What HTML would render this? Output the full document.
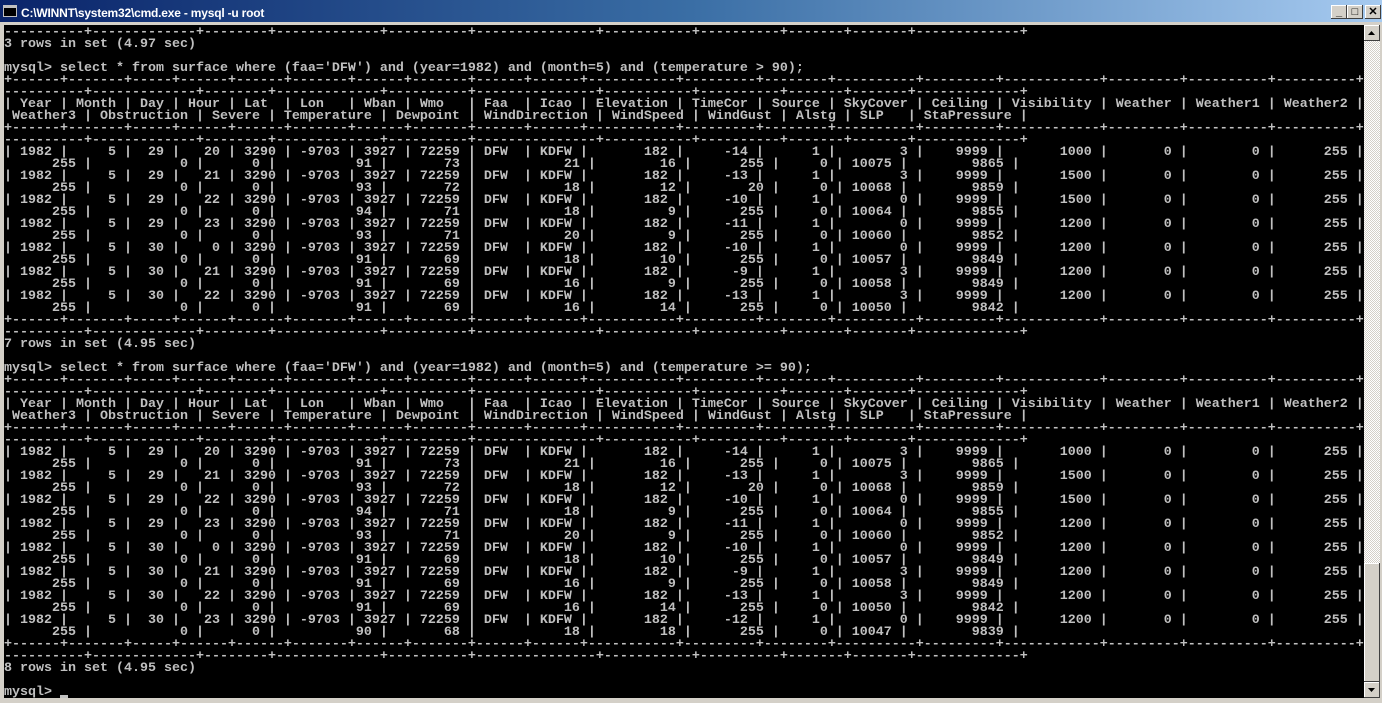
<!DOCTYPE html>
<html><head><meta charset="utf-8"><style>
html,body{margin:0;padding:0;}
body{width:1382px;height:702px;background:#d4d0c8;position:relative;overflow:hidden;}
#title{position:absolute;left:0;top:0;width:1382px;height:22px;background:linear-gradient(to right,#0a246a 0%,#3a6ea5 50%,#a6caf0 100%);}
#title .t{position:absolute;left:21px;top:6px;color:#fff;font:bold 12px "Liberation Sans",sans-serif;letter-spacing:-0.2px;white-space:pre;}
#title .ic{position:absolute;left:3px;top:5px;width:14px;height:12px;background:#000;border:1px solid #c0c0c0;box-sizing:border-box;}
#title .ic:after{content:"";position:absolute;left:0;top:0;width:12px;height:2px;background:#c0c0c0;}
.btn{position:absolute;top:5px;width:16px;height:14px;background:#d4d0c8;box-shadow:inset -1px -1px #404040,inset 1px 1px #fff;font:bold 11px "Liberation Sans",sans-serif;color:#000;text-align:center;line-height:14px;}
#con{position:absolute;left:4px;top:25px;width:1360px;height:673px;background:#000;overflow:hidden;}
pre{margin:0;padding-top:2px;font:bold 13.33px/12px "Liberation Mono",monospace;color:#c0c0c0;white-space:pre;}
#sb{position:absolute;left:1364px;top:25px;width:16px;height:673px;background-color:#eeeeee;background-image:repeating-conic-gradient(#d4d0c8 0 25%,#ffffff 0 50%);background-size:2px 2px;}
.sbb{position:absolute;left:0;width:16px;height:16px;background:#d4d0c8;box-shadow:inset -1px -1px #404040,inset 1px 1px #fff;}
.cur{position:absolute;left:56px;top:668px;width:8px;height:3px;background:#c0c0c0;}
</style></head><body>
<div id="title"><div class="ic"></div><div class="t">C:\WINNT\system32\cmd.exe - mysql -u root</div>
<div class="btn" style="left:1331px">_</div><div class="btn" style="left:1347px">□</div><div class="btn" style="left:1365px">✕</div></div>
<div id="con"><pre>----------+-------------+--------+-------------+----------+---------------+-----------+----------+-------+-------+-------------+
3 rows in set (4.97 sec)

mysql> select * from surface where (faa='DFW') and (year=1982) and (month=5) and (temperature &gt; 90);
+------+-------+-----+------+------+-------+------+-------+------+------+-----------+---------+--------+----------+---------+------------+---------+----------+----------+
----------+-------------+--------+-------------+----------+---------------+-----------+----------+-------+-------+-------------+
| Year | Month | Day | Hour | Lat  | Lon   | Wban | Wmo   | Faa  | Icao | Elevation | TimeCor | Source | SkyCover | Ceiling | Visibility | Weather | Weather1 | Weather2 |
 Weather3 | Obstruction | Severe | Temperature | Dewpoint | WindDirection | WindSpeed | WindGust | Alstg | SLP   | StaPressure |
+------+-------+-----+------+------+-------+------+-------+------+------+-----------+---------+--------+----------+---------+------------+---------+----------+----------+
----------+-------------+--------+-------------+----------+---------------+-----------+----------+-------+-------+-------------+
| 1982 |     5 |  29 |   20 | 3290 | -9703 | 3927 | 72259 | DFW  | KDFW |       182 |     -14 |      1 |        3 |    9999 |       1000 |       0 |        0 |      255 |
      255 |           0 |      0 |          91 |       73 |           21 |        16 |      255 |     0 | 10075 |        9865 |
| 1982 |     5 |  29 |   21 | 3290 | -9703 | 3927 | 72259 | DFW  | KDFW |       182 |     -13 |      1 |        3 |    9999 |       1500 |       0 |        0 |      255 |
      255 |           0 |      0 |          93 |       72 |           18 |        12 |       20 |     0 | 10068 |        9859 |
| 1982 |     5 |  29 |   22 | 3290 | -9703 | 3927 | 72259 | DFW  | KDFW |       182 |     -10 |      1 |        0 |    9999 |       1500 |       0 |        0 |      255 |
      255 |           0 |      0 |          94 |       71 |           18 |         9 |      255 |     0 | 10064 |        9855 |
| 1982 |     5 |  29 |   23 | 3290 | -9703 | 3927 | 72259 | DFW  | KDFW |       182 |     -11 |      1 |        0 |    9999 |       1200 |       0 |        0 |      255 |
      255 |           0 |      0 |          93 |       71 |           20 |         9 |      255 |     0 | 10060 |        9852 |
| 1982 |     5 |  30 |    0 | 3290 | -9703 | 3927 | 72259 | DFW  | KDFW |       182 |     -10 |      1 |        0 |    9999 |       1200 |       0 |        0 |      255 |
      255 |           0 |      0 |          91 |       69 |           18 |        10 |      255 |     0 | 10057 |        9849 |
| 1982 |     5 |  30 |   21 | 3290 | -9703 | 3927 | 72259 | DFW  | KDFW |       182 |      -9 |      1 |        3 |    9999 |       1200 |       0 |        0 |      255 |
      255 |           0 |      0 |          91 |       69 |           16 |         9 |      255 |     0 | 10058 |        9849 |
| 1982 |     5 |  30 |   22 | 3290 | -9703 | 3927 | 72259 | DFW  | KDFW |       182 |     -13 |      1 |        3 |    9999 |       1200 |       0 |        0 |      255 |
      255 |           0 |      0 |          91 |       69 |           16 |        14 |      255 |     0 | 10050 |        9842 |
+------+-------+-----+------+------+-------+------+-------+------+------+-----------+---------+--------+----------+---------+------------+---------+----------+----------+
----------+-------------+--------+-------------+----------+---------------+-----------+----------+-------+-------+-------------+
7 rows in set (4.95 sec)

mysql> select * from surface where (faa='DFW') and (year=1982) and (month=5) and (temperature &gt;= 90);
+------+-------+-----+------+------+-------+------+-------+------+------+-----------+---------+--------+----------+---------+------------+---------+----------+----------+
----------+-------------+--------+-------------+----------+---------------+-----------+----------+-------+-------+-------------+
| Year | Month | Day | Hour | Lat  | Lon   | Wban | Wmo   | Faa  | Icao | Elevation | TimeCor | Source | SkyCover | Ceiling | Visibility | Weather | Weather1 | Weather2 |
 Weather3 | Obstruction | Severe | Temperature | Dewpoint | WindDirection | WindSpeed | WindGust | Alstg | SLP   | StaPressure |
+------+-------+-----+------+------+-------+------+-------+------+------+-----------+---------+--------+----------+---------+------------+---------+----------+----------+
----------+-------------+--------+-------------+----------+---------------+-----------+----------+-------+-------+-------------+
| 1982 |     5 |  29 |   20 | 3290 | -9703 | 3927 | 72259 | DFW  | KDFW |       182 |     -14 |      1 |        3 |    9999 |       1000 |       0 |        0 |      255 |
      255 |           0 |      0 |          91 |       73 |           21 |        16 |      255 |     0 | 10075 |        9865 |
| 1982 |     5 |  29 |   21 | 3290 | -9703 | 3927 | 72259 | DFW  | KDFW |       182 |     -13 |      1 |        3 |    9999 |       1500 |       0 |        0 |      255 |
      255 |           0 |      0 |          93 |       72 |           18 |        12 |       20 |     0 | 10068 |        9859 |
| 1982 |     5 |  29 |   22 | 3290 | -9703 | 3927 | 72259 | DFW  | KDFW |       182 |     -10 |      1 |        0 |    9999 |       1500 |       0 |        0 |      255 |
      255 |           0 |      0 |          94 |       71 |           18 |         9 |      255 |     0 | 10064 |        9855 |
| 1982 |     5 |  29 |   23 | 3290 | -9703 | 3927 | 72259 | DFW  | KDFW |       182 |     -11 |      1 |        0 |    9999 |       1200 |       0 |        0 |      255 |
      255 |           0 |      0 |          93 |       71 |           20 |         9 |      255 |     0 | 10060 |        9852 |
| 1982 |     5 |  30 |    0 | 3290 | -9703 | 3927 | 72259 | DFW  | KDFW |       182 |     -10 |      1 |        0 |    9999 |       1200 |       0 |        0 |      255 |
      255 |           0 |      0 |          91 |       69 |           18 |        10 |      255 |     0 | 10057 |        9849 |
| 1982 |     5 |  30 |   21 | 3290 | -9703 | 3927 | 72259 | DFW  | KDFW |       182 |      -9 |      1 |        3 |    9999 |       1200 |       0 |        0 |      255 |
      255 |           0 |      0 |          91 |       69 |           16 |         9 |      255 |     0 | 10058 |        9849 |
| 1982 |     5 |  30 |   22 | 3290 | -9703 | 3927 | 72259 | DFW  | KDFW |       182 |     -13 |      1 |        3 |    9999 |       1200 |       0 |        0 |      255 |
      255 |           0 |      0 |          91 |       69 |           16 |        14 |      255 |     0 | 10050 |        9842 |
| 1982 |     5 |  30 |   23 | 3290 | -9703 | 3927 | 72259 | DFW  | KDFW |       182 |     -12 |      1 |        0 |    9999 |       1200 |       0 |        0 |      255 |
      255 |           0 |      0 |          90 |       68 |           18 |        18 |      255 |     0 | 10047 |        9839 |
+------+-------+-----+------+------+-------+------+-------+------+------+-----------+---------+--------+----------+---------+------------+---------+----------+----------+
----------+-------------+--------+-------------+----------+---------------+-----------+----------+-------+-------+-------------+
8 rows in set (4.95 sec)

mysql&gt; </pre><div class="cur" style="top:670px"></div></div>
<div id="sb">
<div class="sbb" style="top:0"><svg width="16" height="16"><path d="M4 10h7L7.5 6z" fill="#000"/></svg></div>
<div class="sbb" style="top:538px;height:119px"></div>
<div class="sbb" style="top:657px"><svg width="16" height="16"><path d="M4 6h7L7.5 10z" fill="#000"/></svg></div>
</div>
</body></html>
